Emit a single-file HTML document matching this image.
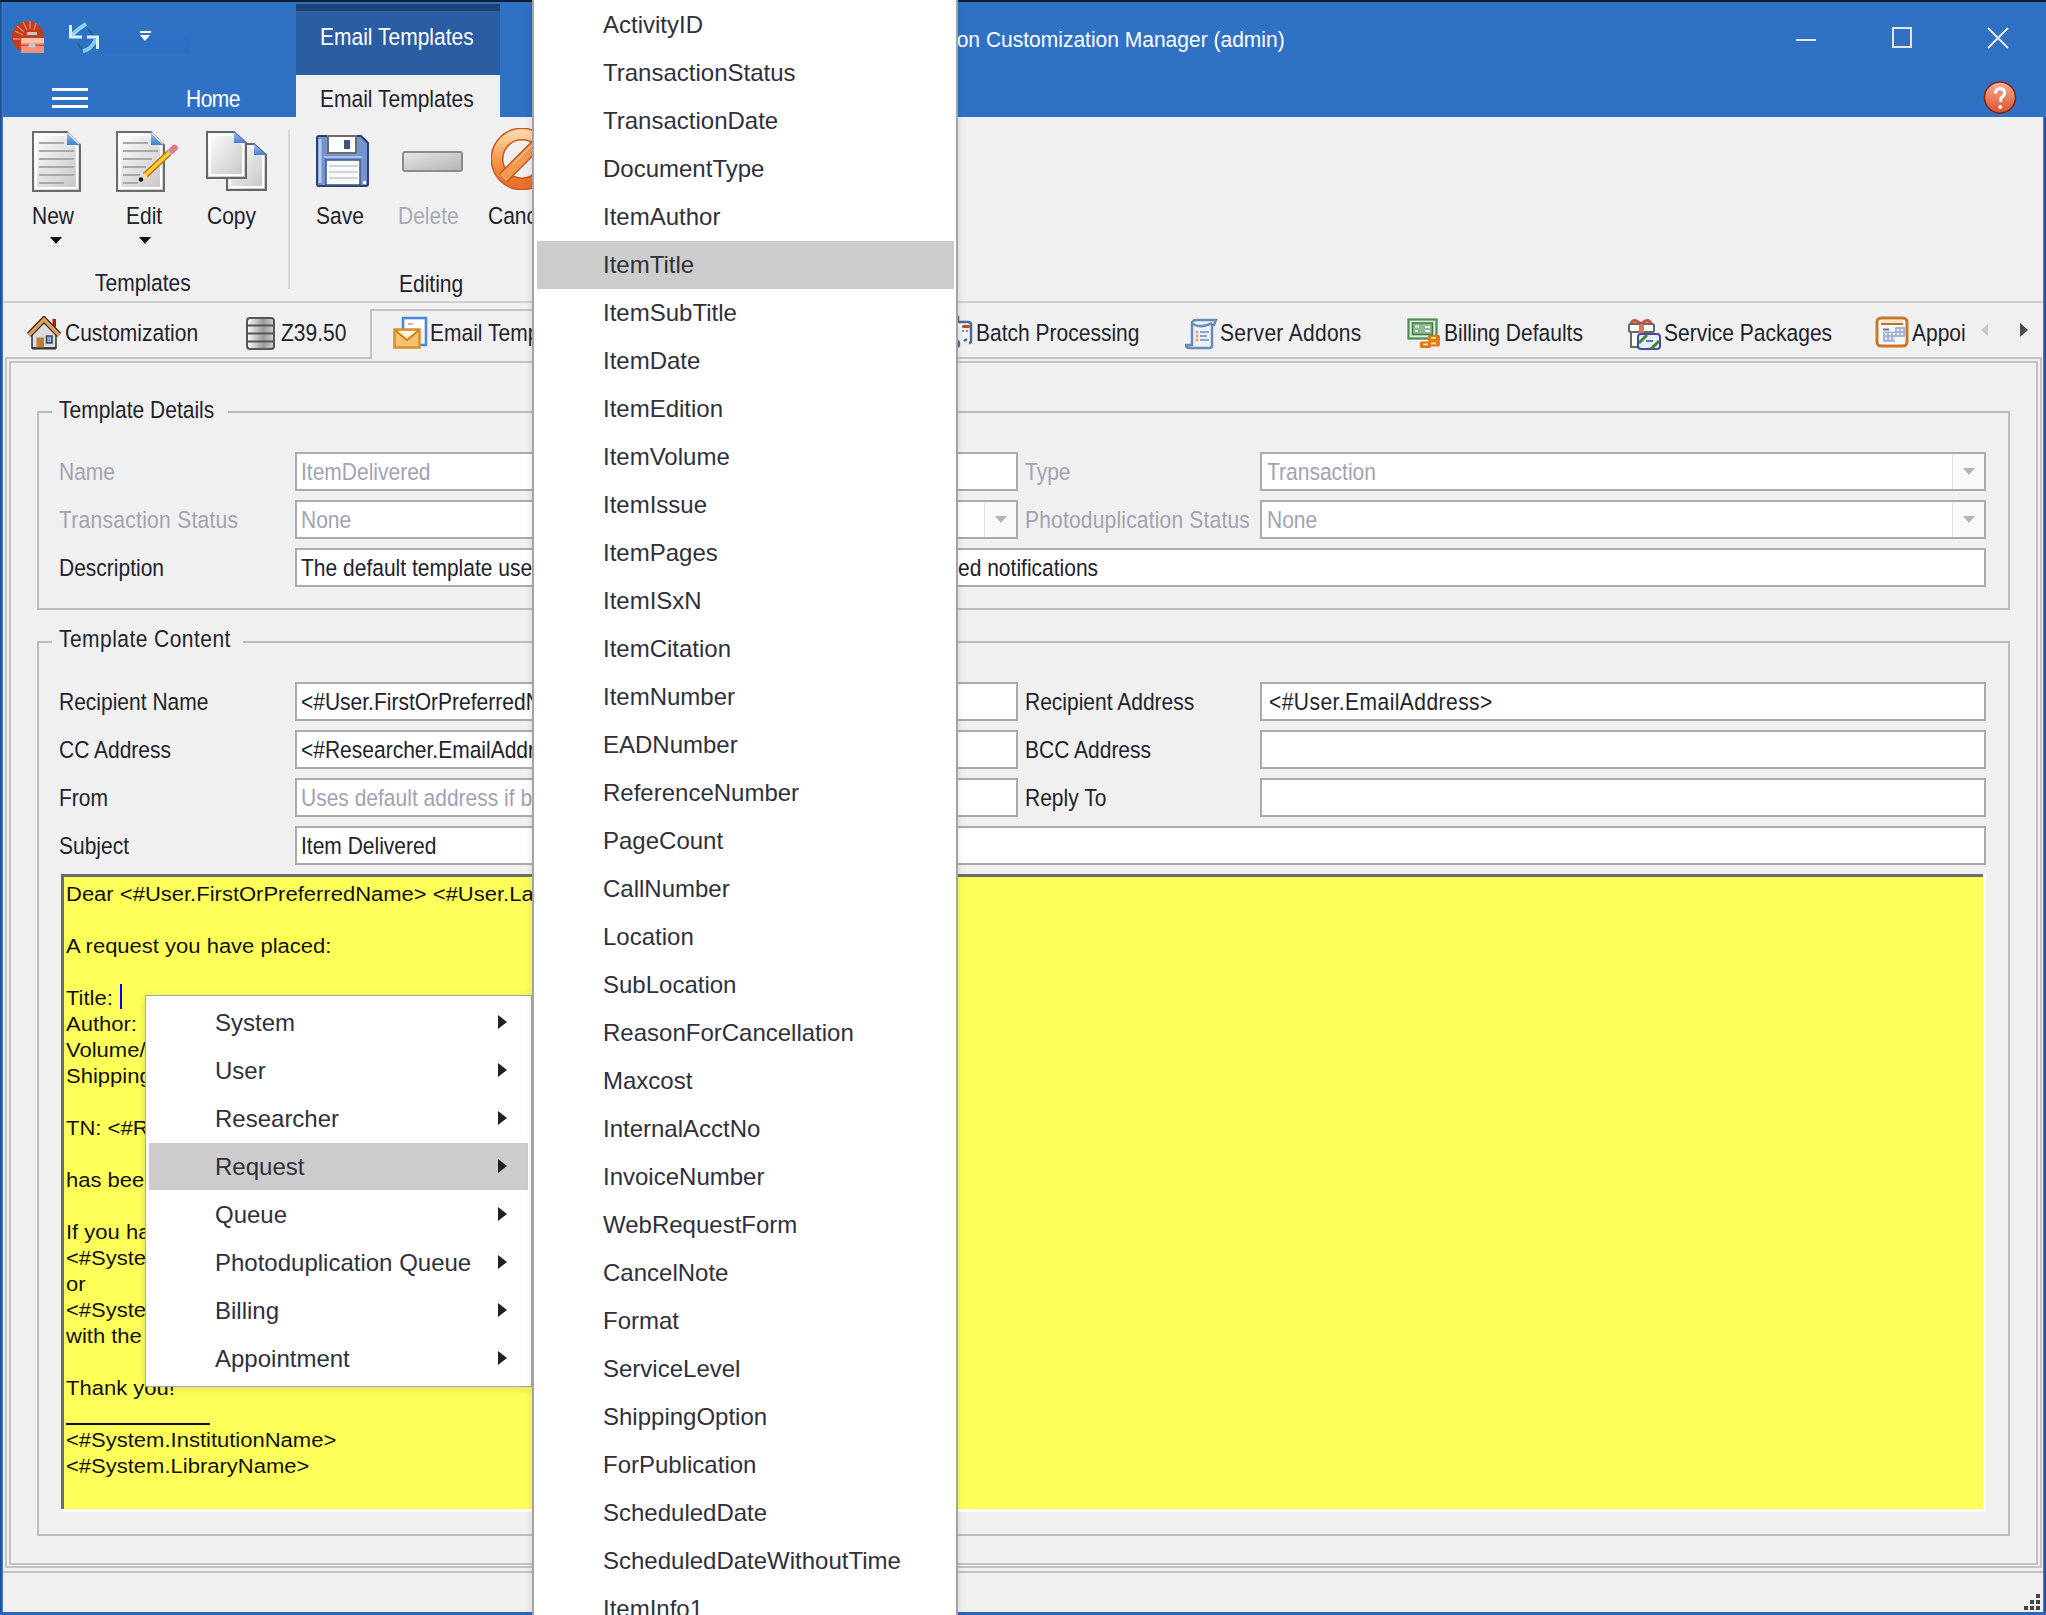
<!DOCTYPE html>
<html><head><meta charset="utf-8">
<style>
html,body{margin:0;padding:0;}
body{width:2046px;height:1615px;overflow:hidden;position:relative;background:#f0f0f0;font-family:"Liberation Sans",sans-serif;color:#22222c;}
.a{position:absolute;}
.t{position:absolute;white-space:nowrap;line-height:1;font-size:21px;transform:translate(-1px,1px) scaleY(1.1);transform-origin:0 18px;}
.w{color:#fff;}
.g{color:#a2a2b2;}
.inp{position:absolute;background:#fff;border:2px solid #ababab;box-sizing:border-box;height:39px;}
.hl{position:absolute;background:#bdbdbd;}
.vl{position:absolute;background:#bdbdbd;}
.mi{position:absolute;white-space:nowrap;line-height:1;font-size:24px;color:#30303c;}
.arr{position:absolute;width:0;height:0;border-top:7px solid transparent;border-bottom:7px solid transparent;border-left:9px solid #222;}
.dd{position:absolute;width:0;height:0;border-left:6px solid transparent;border-right:6px solid transparent;border-top:7px solid #b4b4b4;}
.et{position:absolute;white-space:nowrap;line-height:1;font-size:22px;color:#111;transform:translateY(-1px) scaleY(0.92);transform-origin:0 19px;}
</style></head><body>

<!-- ===== TITLE BAR ===== -->
<div class="a" style="left:0;top:0;width:2046px;height:117px;background:#2f72c4"></div>
<div class="a" style="left:0;top:0;width:2046px;height:2px;background:#0f1d33"></div>
<div class="a" style="left:296px;top:4px;width:204px;height:7px;background:#1d4374"></div>
<div class="a" style="left:296px;top:11px;width:204px;height:64px;background:#2a5da1"></div>
<div class="a" style="left:296px;top:75px;width:204px;height:42px;background:#f0f0f0"></div>
<div class="t w" style="left:321px;top:26px;">Email Templates</div>
<div class="t w" style="left:187px;top:88px;letter-spacing:-0.5px">Home</div>
<div class="t" style="left:321px;top:88px;">Email Templates</div>
<div class="t w" style="left:932px;top:27px;transform:translate(-1px,2px) scaleY(1.02)">Aeon Customization Manager (admin)</div>

<!-- hamburger -->
<div class="a" style="left:52px;top:88px;width:36px;height:3px;background:#fff"></div>
<div class="a" style="left:52px;top:97px;width:36px;height:3px;background:#fff"></div>
<div class="a" style="left:52px;top:105px;width:36px;height:3px;background:#fff"></div>

<!-- window controls -->
<div class="a" style="left:1796px;top:39px;width:20px;height:2px;background:#e9e6df"></div>
<div class="a" style="left:1892px;top:27px;width:20px;height:21px;border:2px solid #e9e6df;box-sizing:border-box"></div>
<svg class="a" style="left:1986px;top:26px" width="24" height="24"><path d="M2 2L22 22M22 2L2 22" stroke="#e9e6df" stroke-width="2"/></svg>

<!-- ===== RIBBON BODY ===== -->
<div class="a" style="left:3px;top:117px;width:2040px;height:184px;background:#f0f0f0"></div>
<div class="a" style="left:3px;top:301px;width:2040px;height:2px;background:#cfcfcf"></div>
<div class="a" style="left:288px;top:130px;width:2px;height:159px;background:#d8d8d8"></div>
<div class="t" style="left:33px;top:205px;">New</div>
<div class="t" style="left:127px;top:205px;">Edit</div>
<div class="t" style="left:208px;top:205px;">Copy</div>
<div class="t" style="left:317px;top:205px;">Save</div>
<div class="t" style="left:399px;top:205px;color:#a8a8b8">Delete</div>
<div class="t" style="left:489px;top:205px;">Cancel</div>
<div class="t" style="left:96px;top:272px;">Templates</div>
<div class="t" style="left:400px;top:273px;">Editing</div>
<div class="a" style="left:50px;top:237px;width:0;height:0;border-left:6px solid transparent;border-right:6px solid transparent;border-top:7px solid #111"></div>
<div class="a" style="left:139px;top:237px;width:0;height:0;border-left:6px solid transparent;border-right:6px solid transparent;border-top:7px solid #111"></div>

<svg width="0" height="0" style="position:absolute">
<defs>
<linearGradient id="pg" x1="0" y1="0" x2="1" y2="1"><stop offset="0" stop-color="#ffffff"/><stop offset="1" stop-color="#c4c4c4"/></linearGradient>
<linearGradient id="fold" x1="0" y1="0" x2="0" y2="1"><stop offset="0" stop-color="#9cc4f0"/><stop offset="1" stop-color="#3f7fd0"/></linearGradient>
<linearGradient id="gbar" x1="0" y1="0" x2="1" y2="1"><stop offset="0" stop-color="#e6e6e6"/><stop offset="1" stop-color="#b4b4b4"/></linearGradient>
<linearGradient id="org" x1="0" y1="0" x2="0" y2="1"><stop offset="0" stop-color="#ffd6a6"/><stop offset="0.5" stop-color="#f39a4c"/><stop offset="1" stop-color="#e8702a"/></linearGradient>
<linearGradient id="zb" x1="0" y1="0" x2="1" y2="0"><stop offset="0" stop-color="#ffffff"/><stop offset="0.6" stop-color="#9a9a9a"/><stop offset="1" stop-color="#d0d0d0"/></linearGradient>
<linearGradient id="help" x1="0" y1="0" x2="0" y2="1"><stop offset="0" stop-color="#f6b39a"/><stop offset="1" stop-color="#d9502a"/></linearGradient>
</defs></svg>

<div class="a" style="left:100px;top:37px;width:90px;height:16px;background:#2e6fc6"></div>
<!-- app icon -->
<svg class="a" style="left:12px;top:21px" width="33" height="33" viewBox="0 0 33 33">
<circle cx="16" cy="16" r="16" fill="#c23c1e"/>
<path d="M3 10L11 14M5 5L12 11M11 1L15 9M18 0L18 8M24 2L22 9M1 18H8" stroke="#e88a6c" stroke-width="1.3"/>
<rect x="15" y="11" width="10" height="3" fill="#c8c8c8"/>
<rect x="9" y="17" width="23" height="15" fill="#f0937a"/>
<rect x="9" y="17" width="23" height="5" fill="#f8c0aa"/>
<rect x="9" y="23.5" width="23" height="1.5" fill="#c85040"/>
<ellipse cx="20" cy="24.5" rx="3.5" ry="2.2" fill="#c8c8c8"/>
</svg>
<!-- sync icon -->
<svg class="a" style="left:68px;top:22px" width="34" height="32" viewBox="0 0 34 32">
<path d="M20 8 A10 10 0 0 1 25 14" stroke="#1f5a80" stroke-width="2" fill="none" opacity="0.7"/>
<path d="M10 21 A10 10 0 0 0 14 27" stroke="#1f5a80" stroke-width="2" fill="none" opacity="0.7"/>
<path d="M18 2 Q11 6 4 13" stroke="#8fd4f4" stroke-width="4" fill="none"/>
<path d="M2.5 3 V15 H14" stroke="#d8f2fc" stroke-width="3" fill="none"/>
<path d="M15 29 Q23 28 28 17" stroke="#86cdf2" stroke-width="4" fill="none"/>
<path d="M19 15 H29.5 V27" stroke="#d8f2fc" stroke-width="3" fill="none"/>
</svg>
<!-- QAT dropdown -->
<div class="a" style="left:140px;top:31px;width:11px;height:2px;background:#fff"></div>
<div class="a" style="left:140px;top:35px;width:0;height:0;border-left:5.5px solid transparent;border-right:5.5px solid transparent;border-top:6px solid #fff"></div>
<!-- help icon -->
<svg class="a" style="left:1983px;top:81px" width="34" height="33" viewBox="0 0 34 33">
<circle cx="17" cy="16.5" r="15.5" fill="url(#help)" stroke="#8a1e10" stroke-width="1.5"/>
<path d="M12.5 12.5 Q12.5 7.5 17 7.5 Q21.5 7.5 21.5 12 Q21.5 15 18 17 L17.5 21" stroke="#fff" stroke-width="3" fill="none"/>
<circle cx="17.3" cy="26" r="2" fill="#fff"/>
</svg>

<!-- New icon -->
<svg class="a" style="left:32px;top:131px" width="49" height="61" viewBox="0 0 49 61">
<path d="M1 1 H35 L48 14 V60 H1 Z" fill="url(#pg)" stroke="#6c6c6c" stroke-width="2"/>
<path d="M4 4 H33 L45 16 V57 H4 Z" fill="none" stroke="#fff" stroke-width="2"/>
<path d="M35 1 V14 H48 Z" fill="url(#fold)"/>
<path d="M36 2 L47 13" stroke="#e8f4ff" stroke-width="1.5"/>
<path d="M7 12H32M7 20H42M7 28H42M7 36H42M7 44H42M7 52H32" stroke="#a8a8a8" stroke-width="2.2"/>
</svg>
<!-- Edit icon -->
<svg class="a" style="left:116px;top:131px" width="62" height="61" viewBox="0 0 62 61">
<path d="M1 1 H35 L48 14 V60 H1 Z" fill="url(#pg)" stroke="#6c6c6c" stroke-width="2"/>
<path d="M4 4 H33 L45 16 V57 H4 Z" fill="none" stroke="#fff" stroke-width="2"/>
<path d="M35 1 V14 H48 Z" fill="url(#fold)"/>
<path d="M36 2 L47 13" stroke="#e8f4ff" stroke-width="1.5"/>
<path d="M7 12H32M7 20H42M7 28H36M7 36H30M7 44H24M7 52H22" stroke="#a8a8a8" stroke-width="2.2"/>
<path d="M29 44.5 L54 21" stroke="#c07018" stroke-width="6.5"/>
<path d="M29 44.5 L54 21" stroke="#f6d030" stroke-width="3.6"/>
<path d="M53 22 L56.5 18.8" stroke="#b4b8c8" stroke-width="6.5"/>
<path d="M56.5 18.8 L58.5 17" stroke="#e07a84" stroke-width="6.5" stroke-linecap="round"/>
<path d="M25.5 48 L30 44" stroke="#f6d8b0" stroke-width="5.5"/>
<circle cx="25" cy="48.5" r="2.3" fill="#111"/>
</svg>
<!-- Copy icon -->
<svg class="a" style="left:206px;top:131px" width="62" height="61" viewBox="0 0 62 61">
<path d="M21 13 H48 L60 24 V59 H21 Z" fill="url(#pg)" stroke="#666" stroke-width="2"/>
<path d="M24 16 H46 L57 26 V56 H24 Z" fill="none" stroke="#fff" stroke-width="2"/>
<path d="M48 13 V24 H60 Z" fill="url(#fold)"/>
<path d="M1 1 H28 L40 12 V47 H1 Z" fill="url(#pg)" stroke="#666" stroke-width="2"/>
<path d="M4 4 H26 L37 14 V44 H4 Z" fill="none" stroke="#fff" stroke-width="2"/>
<path d="M28 1 V12 H40 Z" fill="url(#fold)"/>
</svg>
<!-- Save icon -->
<svg class="a" style="left:316px;top:135px" width="53" height="52" viewBox="0 0 53 52">
<path d="M3 1 H45 L52 8 V49 Q52 51 50 51 H3 Q1 51 1 49 V3 Q1 1 3 1 Z" fill="#7394d0" stroke="#2b3f70" stroke-width="2"/>
<path d="M4 4 V48" stroke="#b8ccf2" stroke-width="3"/>
<rect x="12" y="1" width="28" height="17" fill="#fff" stroke="#6e6a66" stroke-width="2"/>
<rect x="28" y="5" width="6" height="9" fill="#3f5585"/>
<rect x="10" y="25" width="34" height="25" fill="#fafafa" stroke="#3f5585" stroke-width="1.5"/>
<path d="M13 31H42M13 37H42M13 43H42" stroke="#c4c8d0" stroke-width="1.5"/>
<path d="M8 22H46" stroke="#a8c0ee" stroke-width="2"/>
<rect x="47" y="46" width="3" height="3" fill="#fff"/>
</svg>
<!-- Delete icon -->
<svg class="a" style="left:402px;top:151px" width="61" height="21" viewBox="0 0 61 21">
<rect x="1" y="1" width="59" height="19" rx="2" fill="url(#gbar)" stroke="#8c8c8c" stroke-width="2"/>
</svg>
<!-- Cancel icon -->
<svg class="a" style="left:491px;top:128px" width="62" height="62" viewBox="0 0 62 62">
<circle cx="31" cy="31" r="25" fill="none" stroke="#c85a1e" stroke-width="13"/>
<circle cx="31" cy="31" r="25" fill="none" stroke="url(#org)" stroke-width="10"/>
<path d="M12 50 L50 12" stroke="#c85a1e" stroke-width="12"/>
<path d="M12 50 L50 12" stroke="#f29a50" stroke-width="9"/>
<path d="M22 36 L46 12" stroke="#fff" stroke-width="1" opacity="0.8"/>
</svg>

<!-- ===== TAB STRIP ===== -->
<div class="a" style="left:5px;top:357px;width:366px;height:2px;background:#c4c4c4"></div>
<div class="a" style="left:620px;top:357px;width:1421px;height:2px;background:#c4c4c4"></div>
<div class="a" style="left:370px;top:309px;width:2px;height:50px;background:#c4c4c4"></div>
<div class="a" style="left:370px;top:309px;width:250px;height:2px;background:#c4c4c4"></div>
<div class="a" style="left:619px;top:309px;width:2px;height:50px;background:#c4c4c4"></div>
<!-- tab icons -->
<svg class="a" style="left:27px;top:316px" width="35" height="34" viewBox="0 0 35 34">
<rect x="25.5" y="3" width="3.5" height="8" fill="#b01a10"/>
<path d="M5 18 L17 6 L29 18 V32 H5 Z" fill="#dcdce0" stroke="#333" stroke-width="1.5"/>
<path d="M2 19 L17 3.5 L32 19" stroke="#3a2410" stroke-width="6" fill="none"/>
<path d="M2 19 L17 3.5 L32 19" stroke="#dca060" stroke-width="3.5" fill="none"/>
<rect x="9.5" y="21.5" width="7.5" height="11" fill="#c07a3a"/>
<rect x="19.5" y="20" width="5.5" height="7" fill="#7ab0f0" stroke="#444" stroke-width="1.5"/>
<path d="M5 32.5H29" stroke="#333" stroke-width="2"/>
</svg>
<svg class="a" style="left:246px;top:317px" width="29" height="33" viewBox="0 0 29 33">
<rect x="1" y="1" width="27" height="31" rx="3" fill="url(#zb)" stroke="#555" stroke-width="2"/>
<path d="M1 8.5H28M1 16.5H28M1 24.5H28" stroke="#555" stroke-width="2"/>
</svg>
<svg class="a" style="left:393px;top:316px" width="35" height="33" viewBox="0 0 35 33">
<rect x="10" y="2" width="23" height="27" fill="#e8f4ff" stroke="#4a86e0" stroke-width="2.5"/>
<rect x="12" y="4" width="19" height="10" fill="#fff"/>
<path d="M15 8H20" stroke="#aaa" stroke-width="1.5"/>
<rect x="1.5" y="13.5" width="25" height="18" fill="#f4c270" stroke="#d8902a" stroke-width="2.5"/>
<path d="M3 15 L14 24 L25 15" stroke="#c8801e" stroke-width="2" fill="#fff8d8"/>
</svg>
<svg class="a" style="left:954px;top:314px" width="20" height="34" viewBox="0 0 20 34">
<path d="M0 8 H14 Q17 8 17 11 V27 Q17 29 15 29" stroke="#4a6a98" stroke-width="2.5" fill="#f4f8ff"/>
<path d="M0 3 H4 V8" stroke="#4a6a98" stroke-width="2.5" fill="none"/>
<rect x="8" y="11" width="8" height="3" rx="1.5" fill="#c04a10"/>
<circle cx="9" cy="17" r="1.3" fill="#8a9ab8"/><circle cx="13" cy="17" r="1.3" fill="#8a9ab8"/>
<path d="M0 26 Q5 26 5 30 Q5 33 2 33" stroke="#4a6a98" stroke-width="2.5" fill="none"/>
<path d="M10 27 L13 25" stroke="#4a6a98" stroke-width="2.5"/>
</svg>
<svg class="a" style="left:1185px;top:317px" width="33" height="33" viewBox="0 0 33 33">
<path d="M7 6 Q7 3 12 3 H31 L29 8 H27 V29 Q27 31 24 31 H5 Q1 31 1 28 H7 Z" fill="#eaf2ff" stroke="#6a8ab8" stroke-width="2.5"/>
<path d="M8 7 Q16 12 27 6" stroke="#6a8ab8" stroke-width="2.5" fill="none"/>
<circle cx="12" cy="15" r="1.5" fill="#f0a060"/><circle cx="12" cy="19" r="1.5" fill="#f0a060"/><circle cx="12" cy="23" r="1.5" fill="#f0a060"/>
<path d="M15 15H24M15 19H22M15 23H24" stroke="#94a4c4" stroke-width="1.8"/>
</svg>
<svg class="a" style="left:1407px;top:318px" width="35" height="31" viewBox="0 0 35 31">
<rect x="1.5" y="1.5" width="28" height="19" fill="#dfeedd" stroke="#4e8e56" stroke-width="2.2"/>
<rect x="5.5" y="5" width="20" height="11.5" fill="#8cba92" stroke="#4a7a50" stroke-width="1.6"/>
<rect x="8" y="7.5" width="4" height="2" fill="#e4f0e4"/><rect x="8" y="12" width="3" height="2" fill="#e4f0e4"/>
<rect x="18" y="8" width="5" height="2" fill="#e4f0e4"/><rect x="18" y="12" width="5" height="2" fill="#e4f0e4"/>
<rect x="21" y="17" width="12" height="6" rx="1.5" fill="#e0741e"/>
<rect x="21" y="22.5" width="12" height="6" rx="1.5" fill="#e07e24"/>
<rect x="13" y="23.5" width="11" height="6.5" rx="1.5" fill="#dc7420"/>
<rect x="24" y="19" width="5" height="1.8" fill="#ffef60"/><rect x="24" y="24.5" width="5" height="1.8" fill="#ffef60"/>
<rect x="16" y="25.5" width="5" height="1.8" fill="#ffef60"/>
</svg>
<svg class="a" style="left:1627px;top:316px" width="34" height="34" viewBox="0 0 34 34">
<path d="M4 8 Q6 1 14 8 Q22 1 24 8" stroke="#d05040" stroke-width="3" fill="#f0b0a0"/>
<rect x="2" y="8" width="25" height="8" rx="1.5" fill="#fff" stroke="#666" stroke-width="2"/>
<rect x="4" y="16" width="21" height="15" fill="#fff" stroke="#666" stroke-width="2"/>
<rect x="12" y="8" width="5" height="14" fill="#e07060"/>
<rect x="11" y="18" width="22" height="15" rx="3" fill="#e4eeff" stroke="#4848a0" stroke-width="2"/>
<path d="M12 27 L20 19M24 33 L32 25" stroke="#3a8a2a" stroke-width="3"/>
<path d="M19 25H26" stroke="#6a6ac0" stroke-width="2"/>
</svg>
<svg class="a" style="left:1875px;top:316px" width="34" height="32" viewBox="0 0 34 32">
<rect x="2" y="2" width="30" height="28" rx="4" fill="#f4f8ff" stroke="#c8782a" stroke-width="3"/>
<path d="M6 5.5H28" stroke="#f8e0b0" stroke-width="2"/>
<path d="M6 8H28" stroke="#c07020" stroke-width="2"/>
<path d="M8 13.5H14" stroke="#6a7890" stroke-width="2"/>
<path d="M19 11.5H30M8 16.5H30M8 20.5H30M8 24.5H20M20 10V20M24 10V20M12 14V25M16 14V25" stroke="#a8b4d4" stroke-width="0"/>
<rect x="20" y="11" width="10" height="10" rx="1" fill="#a8b4d4"/>
<rect x="8" y="15.5" width="18" height="5.5" rx="1" fill="#a8b4d4"/>
<rect x="8" y="19" width="12" height="7" rx="1" fill="#a8b4d4"/>
<g fill="#f4f8ff"><rect x="22" y="13" width="2" height="2"/><rect x="26" y="13" width="2" height="2"/>
<rect x="10" y="17" width="2" height="2"/><rect x="14" y="17" width="2" height="2"/><rect x="18" y="17" width="2" height="2"/><rect x="22" y="17" width="2" height="2"/><rect x="26" y="17" width="2" height="2"/>
<rect x="10" y="21.5" width="2" height="2"/><rect x="14" y="21.5" width="2" height="2"/><rect x="18" y="21.5" width="2" height="2"/></g>
</svg>

<div class="t" style="left:66px;top:322px;">Customization</div>
<div class="t" style="left:282px;top:322px;">Z39.50</div>
<div class="t" style="left:431px;top:322px;">Email Templates</div>
<div class="t" style="left:977px;top:322px;">Batch Processing</div>
<div class="t" style="left:1221px;top:322px;letter-spacing:0.3px">Server Addons</div>
<div class="t" style="left:1445px;top:322px;">Billing Defaults</div>
<div class="t" style="left:1665px;top:322px;">Service Packages</div>
<div class="a" style="left:1910px;top:310px;width:56px;height:45px;overflow:hidden"><div class="t" style="left:3px;top:12px;">Appointments</div></div>
<div class="a" style="left:1981px;top:324px;width:0;height:0;border-top:6px solid transparent;border-bottom:6px solid transparent;border-right:7px solid #c8c8c8"></div>
<div class="a" style="left:2020px;top:323px;width:0;height:0;border-top:7px solid transparent;border-bottom:7px solid transparent;border-left:8px solid #4a4a4a"></div>

<!-- ===== PANEL ===== -->
<!-- panel borders -->
<div class="a" style="left:5px;top:359px;width:2px;height:1209px;background:#c4c4c4"></div>
<div class="a" style="left:2040px;top:357px;width:2px;height:1211px;background:#c4c4c4"></div>
<div class="a" style="left:5px;top:1566px;width:2037px;height:2px;background:#c4c4c4"></div>
<div class="a" style="left:9px;top:361px;width:2029px;height:2px;background:#c4c4c4"></div>
<div class="a" style="left:9px;top:361px;width:2px;height:1204px;background:#c4c4c4"></div>
<div class="a" style="left:2036px;top:361px;width:2px;height:1204px;background:#c4c4c4"></div>
<div class="a" style="left:9px;top:1563px;width:2029px;height:2px;background:#c4c4c4"></div>
<!-- status bar -->
<div class="a" style="left:3px;top:1571px;width:2040px;height:2px;background:#c4c4c4"></div>

<!-- group: Template Details -->
<div class="a" style="left:37px;top:411px;width:1973px;height:199px;border:2px solid #bdbdbd;box-sizing:border-box"></div>
<div class="a" style="left:52px;top:400px;width:176px;height:20px;background:#f0f0f0"></div>
<div class="t" style="left:60px;top:399px;">Template Details</div>

<div class="t g" style="left:60px;top:461px;">Name</div>
<div class="t g" style="left:60px;top:509px;letter-spacing:0.28px">Transaction Status</div>
<div class="t" style="left:60px;top:557px;">Description</div>
<div class="t g" style="left:1026px;top:461px;">Type</div>
<div class="t g" style="left:1026px;top:509px;letter-spacing:0.19px">Photoduplication Status</div>

<div class="inp" style="left:295px;top:452px;width:723px;"></div>
<div class="inp" style="left:295px;top:500px;width:723px;"></div>
<div class="a" style="left:984px;top:502px;width:1px;height:35px;background:#e2e2e2"></div>
<div class="a" style="left:985px;top:502px;width:31px;height:35px;background:#f9f9f9"></div>
<div class="dd" style="left:995px;top:516px"></div>
<div class="inp" style="left:295px;top:548px;width:1691px;"></div>
<div class="inp" style="left:1260px;top:452px;width:726px;"></div>
<div class="a" style="left:1952px;top:454px;width:1px;height:35px;background:#e2e2e2"></div>
<div class="a" style="left:1953px;top:454px;width:31px;height:35px;background:#f9f9f9"></div>
<div class="dd" style="left:1963px;top:468px"></div>
<div class="inp" style="left:1260px;top:500px;width:726px;"></div>
<div class="a" style="left:1952px;top:502px;width:1px;height:35px;background:#e2e2e2"></div>
<div class="a" style="left:1953px;top:502px;width:31px;height:35px;background:#f9f9f9"></div>
<div class="dd" style="left:1963px;top:516px"></div>

<div class="t g" style="left:302px;top:461px;">ItemDelivered</div>
<div class="t g" style="left:302px;top:509px;">None</div>
<div class="t" style="left:302px;top:557px;">The default template used for item</div>
<div class="t" style="left:959px;top:557px;">ed notifications</div>
<div class="t g" style="left:1268px;top:461px;">Transaction</div>
<div class="t g" style="left:1268px;top:509px;">None</div>

<!-- group: Template Content -->
<div class="a" style="left:37px;top:641px;width:1973px;height:895px;border:2px solid #bdbdbd;box-sizing:border-box"></div>
<div class="a" style="left:52px;top:630px;width:191px;height:20px;background:#f0f0f0"></div>
<div class="t" style="left:60px;top:628px;letter-spacing:0.45px">Template Content</div>

<div class="t" style="left:60px;top:691px;">Recipient Name</div>
<div class="t" style="left:60px;top:739px;">CC Address</div>
<div class="t" style="left:60px;top:787px;">From</div>
<div class="t" style="left:60px;top:835px;">Subject</div>
<div class="t" style="left:1026px;top:691px;">Recipient Address</div>
<div class="t" style="left:1026px;top:739px;">BCC Address</div>
<div class="t" style="left:1026px;top:787px;">Reply To</div>

<div class="inp" style="left:295px;top:682px;width:723px;"></div>
<div class="inp" style="left:295px;top:730px;width:723px;"></div>
<div class="inp" style="left:295px;top:778px;width:723px;"></div>
<div class="inp" style="left:295px;top:826px;width:1691px;"></div>
<div class="inp" style="left:1260px;top:682px;width:726px;"></div>
<div class="inp" style="left:1260px;top:730px;width:726px;"></div>
<div class="inp" style="left:1260px;top:778px;width:726px;"></div>

<div class="t" style="left:302px;top:691px;">&lt;#User.FirstOrPreferredName&gt;</div>
<div class="t" style="left:302px;top:739px;">&lt;#Researcher.EmailAddress&gt;</div>
<div class="t g" style="left:302px;top:787px;">Uses default address if blank</div>
<div class="t" style="left:302px;top:835px;">Item Delivered</div>
<div class="t" style="left:1270px;top:691px;letter-spacing:0.45px">&lt;#User.EmailAddress&gt;</div>

<!-- editor -->
<div class="a" style="left:61px;top:874px;width:1925px;height:638px;background:#fff"></div>
<div class="a" style="left:61px;top:874px;width:1922px;height:635px;background:#6e6e6e"></div>
<div class="a" style="left:64px;top:877px;width:1919px;height:632px;background:#ffff5a"></div>
<div class="et" style="left:66px;top:884px;">Dear &lt;#User.FirstOrPreferredName&gt; &lt;#User.LastName&gt;,</div>
<div class="et" style="left:66px;top:936px;">A request you have placed:</div>
<div class="et" style="left:66px;top:988px;">Title: </div>
<div class="a" style="left:120px;top:984px;width:2px;height:25px;background:#0000ff"></div>
<div class="et" style="left:66px;top:1014px;">Author:</div>
<div class="et" style="left:66px;top:1040px;">Volume/Issue: &lt;#Request.ItemVolume&gt;</div>
<div class="et" style="left:66px;top:1066px;">Shipping: &lt;#Request.ShippingOption&gt;</div>
<div class="et" style="left:66px;top:1118px;">TN: &lt;#Request.TransactionNumber&gt;</div>
<div class="et" style="left:66px;top:1170px;">has been delivered.</div>
<div class="et" style="left:66px;top:1222px;">If you have any questions, please contact us at</div>
<div class="et" style="left:66px;top:1248px;">&lt;#System.PhoneNumber&gt;</div>
<div class="et" style="left:66px;top:1274px;">or</div>
<div class="et" style="left:66px;top:1300px;">&lt;#System.EmailAddress&gt;</div>
<div class="et" style="left:66px;top:1326px;">with the transaction number.</div>
<div class="et" style="left:66px;top:1378px;">Thank you!</div>
<div class="a" style="left:66px;top:1423px;width:144px;height:2px;background:#111"></div>
<div class="et" style="left:66px;top:1430px;">&lt;#System.InstitutionName&gt;</div>
<div class="et" style="left:66px;top:1456px;">&lt;#System.LibraryName&gt;</div>

<!-- grip -->
<div class="a" style="left:2036px;top:1594px;width:4px;height:4px;background:#444"></div>
<div class="a" style="left:2030px;top:1600px;width:4px;height:4px;background:#444"></div>
<div class="a" style="left:2036px;top:1600px;width:4px;height:4px;background:#444"></div>
<div class="a" style="left:2024px;top:1606px;width:4px;height:4px;background:#444"></div>
<div class="a" style="left:2030px;top:1606px;width:4px;height:4px;background:#444"></div>
<div class="a" style="left:2036px;top:1606px;width:4px;height:4px;background:#444"></div>

<!-- ===== WINDOW BORDERS ===== -->
<div class="a" style="left:0;top:2px;width:3px;height:1613px;background:linear-gradient(90deg,#1b4584,#2a62b4 60%,#4b8ad8)"></div>
<div class="a" style="left:2043px;top:117px;width:3px;height:1498px;background:linear-gradient(90deg,#4b8ad8,#2a62b4 40%,#1b4584)"></div>
<div class="a" style="left:0;top:1612px;width:2046px;height:3px;background:#2a66b8"></div>

<!-- ===== MENUS ===== -->
<!-- context menu -->
<div class="a" style="left:145px;top:995px;width:387px;height:392px;background:#fff;border:1px solid #a4a4b8;box-sizing:border-box;box-shadow:0 2px 9px rgba(0,0,0,0.13)"></div>
<div class="hl" style="left:149px;top:1143px;width:379px;height:47px;background:#cccccc"></div>
<div class="mi" style="left:215px;top:1011px;">System</div>
<div class="mi" style="left:215px;top:1059px;">User</div>
<div class="mi" style="left:215px;top:1107px;">Researcher</div>
<div class="mi" style="left:215px;top:1155px;">Request</div>
<div class="mi" style="left:215px;top:1203px;">Queue</div>
<div class="mi" style="left:215px;top:1251px;">Photoduplication Queue</div>
<div class="mi" style="left:215px;top:1299px;">Billing</div>
<div class="mi" style="left:215px;top:1347px;">Appointment</div>
<div class="arr" style="left:498px;top:1015px"></div>
<div class="arr" style="left:498px;top:1063px"></div>
<div class="arr" style="left:498px;top:1111px"></div>
<div class="arr" style="left:498px;top:1159px"></div>
<div class="arr" style="left:498px;top:1207px"></div>
<div class="arr" style="left:498px;top:1255px"></div>
<div class="arr" style="left:498px;top:1303px"></div>
<div class="arr" style="left:498px;top:1351px"></div>

<!-- submenu -->
<div class="a" style="left:532px;top:-4px;width:426px;height:1625px;background:#fff;border:2px solid #a4a4a4;box-sizing:border-box;box-shadow:0 0 8px rgba(0,0,0,0.12)"></div>
<div class="hl" style="left:537px;top:241px;width:417px;height:48px;background:#cccccc"></div>
<div class="a" style="left:603px;top:1px;">
<div class="mi" style="position:relative;height:48px;line-height:48px;">ActivityID</div>
<div class="mi" style="position:relative;height:48px;line-height:48px;">TransactionStatus</div>
<div class="mi" style="position:relative;height:48px;line-height:48px;">TransactionDate</div>
<div class="mi" style="position:relative;height:48px;line-height:48px;">DocumentType</div>
<div class="mi" style="position:relative;height:48px;line-height:48px;">ItemAuthor</div>
<div class="mi" style="position:relative;height:48px;line-height:48px;">ItemTitle</div>
<div class="mi" style="position:relative;height:48px;line-height:48px;">ItemSubTitle</div>
<div class="mi" style="position:relative;height:48px;line-height:48px;">ItemDate</div>
<div class="mi" style="position:relative;height:48px;line-height:48px;">ItemEdition</div>
<div class="mi" style="position:relative;height:48px;line-height:48px;">ItemVolume</div>
<div class="mi" style="position:relative;height:48px;line-height:48px;">ItemIssue</div>
<div class="mi" style="position:relative;height:48px;line-height:48px;">ItemPages</div>
<div class="mi" style="position:relative;height:48px;line-height:48px;">ItemISxN</div>
<div class="mi" style="position:relative;height:48px;line-height:48px;">ItemCitation</div>
<div class="mi" style="position:relative;height:48px;line-height:48px;">ItemNumber</div>
<div class="mi" style="position:relative;height:48px;line-height:48px;">EADNumber</div>
<div class="mi" style="position:relative;height:48px;line-height:48px;">ReferenceNumber</div>
<div class="mi" style="position:relative;height:48px;line-height:48px;">PageCount</div>
<div class="mi" style="position:relative;height:48px;line-height:48px;">CallNumber</div>
<div class="mi" style="position:relative;height:48px;line-height:48px;">Location</div>
<div class="mi" style="position:relative;height:48px;line-height:48px;">SubLocation</div>
<div class="mi" style="position:relative;height:48px;line-height:48px;">ReasonForCancellation</div>
<div class="mi" style="position:relative;height:48px;line-height:48px;">Maxcost</div>
<div class="mi" style="position:relative;height:48px;line-height:48px;">InternalAcctNo</div>
<div class="mi" style="position:relative;height:48px;line-height:48px;">InvoiceNumber</div>
<div class="mi" style="position:relative;height:48px;line-height:48px;">WebRequestForm</div>
<div class="mi" style="position:relative;height:48px;line-height:48px;">CancelNote</div>
<div class="mi" style="position:relative;height:48px;line-height:48px;">Format</div>
<div class="mi" style="position:relative;height:48px;line-height:48px;">ServiceLevel</div>
<div class="mi" style="position:relative;height:48px;line-height:48px;">ShippingOption</div>
<div class="mi" style="position:relative;height:48px;line-height:48px;">ForPublication</div>
<div class="mi" style="position:relative;height:48px;line-height:48px;">ScheduledDate</div>
<div class="mi" style="position:relative;height:48px;line-height:48px;">ScheduledDateWithoutTime</div>
<div class="mi" style="position:relative;height:48px;line-height:48px;">ItemInfo1</div>
</div>

</body></html>
